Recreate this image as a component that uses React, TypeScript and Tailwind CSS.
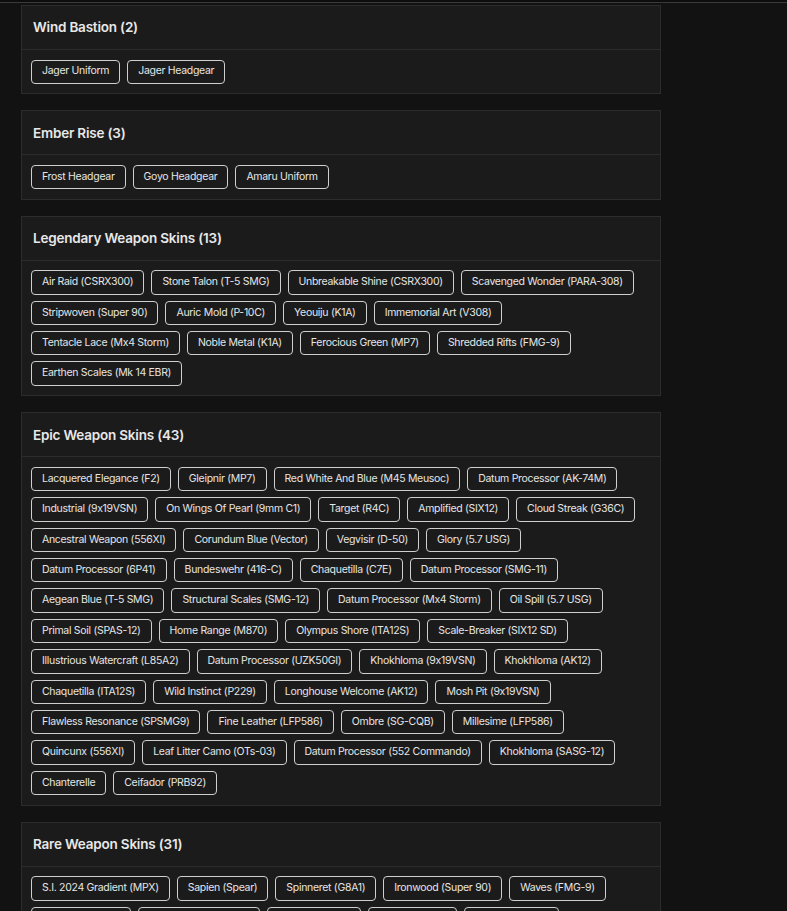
import React from "react";

type Group = { title: string; rows: string[][] };

const groups: Group[] = [
  { title: "Wind Bastion", rows: [["Jager Uniform", "Jager Headgear"]] },
  { title: "Ember Rise", rows: [["Frost Headgear", "Goyo Headgear", "Amaru Uniform"]] },
  {
    title: "Legendary Weapon Skins",
    rows: [
      ["Air Raid (CSRX300)", "Stone Talon (T-5 SMG)", "Unbreakable Shine (CSRX300)", "Scavenged Wonder (PARA-308)"],
      ["Stripwoven (Super 90)", "Auric Mold (P-10C)", "Yeouiju (K1A)", "Immemorial Art (V308)"],
      ["Tentacle Lace (Mx4 Storm)", "Noble Metal (K1A)", "Ferocious Green (MP7)", "Shredded Rifts (FMG-9)"],
      ["Earthen Scales (Mk 14 EBR)"],
    ],
  },
  {
    title: "Epic Weapon Skins",
    rows: [
      ["Lacquered Elegance (F2)", "Gleipnir (MP7)", "Red White And Blue (M45 Meusoc)", "Datum Processor (AK-74M)"],
      ["Industrial (9x19VSN)", "On Wings Of Pearl (9mm C1)", "Target (R4C)", "Amplified (SIX12)", "Cloud Streak (G36C)"],
      ["Ancestral Weapon (556XI)", "Corundum Blue (Vector)", "Vegvisir (D-50)", "Glory (5.7 USG)"],
      ["Datum Processor (6P41)", "Bundeswehr (416-C)", "Chaquetilla (C7E)", "Datum Processor (SMG-11)"],
      ["Aegean Blue (T-5 SMG)", "Structural Scales (SMG-12)", "Datum Processor (Mx4 Storm)", "Oil Spill (5.7 USG)"],
      ["Primal Soil (SPAS-12)", "Home Range (M870)", "Olympus Shore (ITA12S)", "Scale-Breaker (SIX12 SD)"],
      ["Illustrious Watercraft (L85A2)", "Datum Processor (UZK50GI)", "Khokhloma (9x19VSN)", "Khokhloma (AK12)"],
      ["Chaquetilla (ITA12S)", "Wild Instinct (P229)", "Longhouse Welcome (AK12)", "Mosh Pit (9x19VSN)"],
      ["Flawless Resonance (SPSMG9)", "Fine Leather (LFP586)", "Ombre (SG-CQB)", "Millesime (LFP586)"],
      ["Quincunx (556XI)", "Leaf Litter Camo (OTs-03)", "Datum Processor (552 Commando)", "Khokhloma (SASG-12)"],
      ["Chanterelle", "Ceifador (PRB92)"],
    ],
  },
  {
    title: "Rare Weapon Skins",
    rows: [
      ["S.I. 2024 Gradient (MPX)", "Sapien (Spear)", "Spinneret (G8A1)", "Ironwood (Super 90)", "Waves (FMG-9)"],
      ["Dusk (Alda 5.56)", "Copper Rush (SR-25)", "Molten (M1014)", "Ember (AK-12)", "Foxfire (L85A2)"],
      ["Blue Ice (Vector)", "Polished Jade (MP5)", "Night Bloom (AUG A2)", "Ash Grain (G36C)", "Lantern (P90)"],
      ["Static Field (M4)", "Drift (SC3000K)", "Hollow Bone (417)", "Red Tide (C8-SFW)", "Dune (SPAS-15)"],
      ["Sunset Haze (T-95 LSW)", "Cobalt (ARX200)", "Grove (Commando 9)", "Pale Stone (P10 RONI)"],
      ["Frostbite (M249)", "Cinder (LMG-E)", "Riverbed (AR33)", "Tidepool (CAMRS)", "Coral Reef (F2)"],
      ["Quartz (TCSG12)", "Moss (Scorpion EVO)"],
    ],
  },
];

function Tag({ label }: { label: string }) {
  return (
    <span className="inline-flex h-[24.4px] items-center whitespace-nowrap rounded-[4px] border border-[#cfcfcf] px-[10px] text-[10.5px] leading-none tracking-[-0.3px] text-[#e6e6e6]">
      {label}
    </span>
  );
}

function GroupCard({ group }: { group: Group }) {
  const count = group.rows.reduce((n, r) => n + r.length, 0);
  return (
    <section className="w-[640px] border border-[#2c2c2c] bg-[#1b1b1b]">
      <div className="flex h-[44px] items-center border-b border-[#2c2c2c] px-[11px]">
        <h2 className="text-[13.5px] font-semibold tracking-[-0.2px] text-[#e8e8e8]">
          {group.title} ({count})
        </h2>
      </div>
      <div className="flex flex-col gap-[6px] px-[9px] pb-[9.5px] pt-[9.5px]">
        {group.rows.map((row, i) => (
          <div key={i} className="flex gap-[7px]">
            {row.map((item) => (
              <Tag key={item} label={item} />
            ))}
          </div>
        ))}
      </div>
    </section>
  );
}

export default function App() {
  return (
    <div className="min-h-screen bg-[#121212] font-['Inter',sans-serif] [font-feature-settings:'calt'_0]">
      <div className="h-[2px] bg-[#0d0d0d]" />
      <div className="h-px bg-[#3a3a3a]" />
      <div className="flex flex-col gap-4 px-[21px] pt-[2px]">
        {groups.map((g) => (
          <GroupCard key={g.title} group={g} />
        ))}
      </div>
    </div>
  );
}
